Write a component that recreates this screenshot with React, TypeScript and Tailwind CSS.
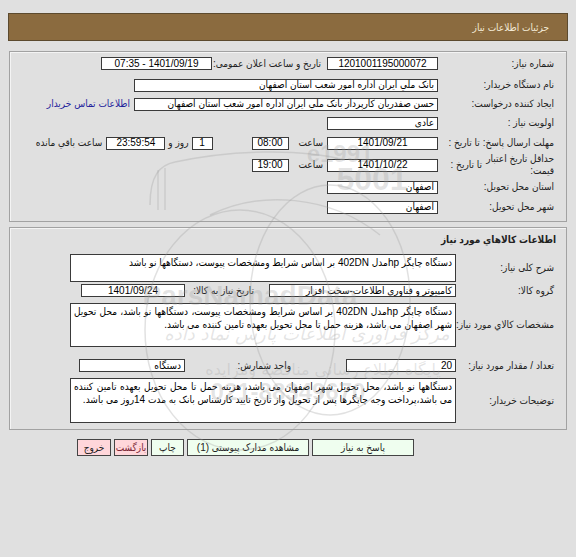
import React from "react";

type Kids = { className?: string; children?: React.ReactNode };

function Box({ className = "", children }: Kids) {
  return (
    <div
      className={`flex h-[13px] shrink-0 items-center overflow-hidden whitespace-nowrap border border-[#3a3a3a] bg-white px-[3px] text-[10px] leading-none text-black ${className}`}>
      {children}
    </div>
  );
}

function Area({ className = "", children }: Kids) {
  return (
    <div
      className={`shrink-0 overflow-hidden border border-[#3a3a3a] bg-white px-[3px] pt-[1px] text-justify text-[10px] leading-[13px] text-black ${className}`}>
      {children}
    </div>
  );
}

function Label({ className = "", children }: Kids) {
  return (
    <div className={`shrink-0 whitespace-nowrap text-[10px] leading-[12px] text-[#222] ${className}`}>
      {children}
    </div>
  );
}

function Btn({ className = "", children }: Kids) {
  return (
    <div
      className={`flex h-[17px] shrink-0 items-center justify-center whitespace-nowrap border border-[#444] text-[10px] leading-none ${className}`}>
      {children}
    </div>
  );
}

// faint site watermark drawn over the form
function Watermark() {
  return (
    <svg
      className="pointer-events-none absolute left-0 top-0"
      style={{ direction: "ltr" }}
      width="576"
      height="557"
      viewBox="0 0 576 557">
      <g fill="none" stroke="#9a9a9a" strokeOpacity="0.3" strokeWidth="1.5">
        <path d="M150 205 C150 175 160 165 175 162 C230 150 300 148 345 160" />
        <path d="M158 210 L158 170" />
        <path d="M165 210 L165 168" />
        <ellipse cx="240" cy="330" rx="95" ry="120" />
        <ellipse cx="330" cy="300" rx="80" ry="115" />
        <path d="M210 215 C260 190 330 195 380 235" />
      </g>
      <g fill="#a0a0a0" fillOpacity="0.28" fontFamily="Liberation Sans, DejaVu Sans, sans-serif" textAnchor="middle">
        <text x="340" y="162" fontSize="24" fontWeight="bold">e1991</text>
        <text x="372" y="190" fontSize="32" fontWeight="bold">5001</text>
        <text x="250" y="305" fontSize="28" fontWeight="bold">ParsNamadData</text>
        <text x="288" y="400" fontSize="24" fontWeight="bold">021-88349670</text>
      </g>
      <g fill="#a0a0a0" fillOpacity="0.28" fontFamily="DejaVu Sans, sans-serif" textAnchor="middle" style={{ direction: "rtl" }}>
        <text x="307" y="340" fontSize="18" fontStyle="italic">مرکز فراوری اطلاعات پارس نماد داده</text>
        <text x="323" y="375" fontSize="16">پایگاه اطلاع رسانی مناقصه ومزایده</text>
      </g>
    </svg>
  );
}

const panel = "mx-[9px] border border-[#a2a2a2] shadow-[inset_1px_1px_0_#f4f4f4]";

export default function App() {
  return (
    <div
      dir="rtl"
      className="relative min-h-[557px] w-[576px] bg-[#e0e0e0] pt-[13px] font-['Liberation_Sans','DejaVu_Sans_Condensed','DejaVu_Sans',sans-serif]">
      {/* header bar */}
      <div className="mx-[8px] flex h-[28px] items-center border border-[#5c4a2e] bg-[#8b6b3f] pr-[18px] text-[10px] text-[#f3ead6]">
        جزئیات اطلاعات نیاز
      </div>

      {/* panel 1 */}
      <div className={`${panel} mt-[10px] pb-[4px]`}>
        <div className="flex h-[23px] items-center">
          <Label className="w-[128px] pr-[12px]">شماره نیاز:</Label>
          <Box className="w-[111px] justify-center">1201001195000072</Box>
          <Label className="w-[115px] pr-[6px]">تاریخ و ساعت اعلان عمومی:</Label>
          <Box className="w-[111px] justify-center">1401/09/19 - 07:35</Box>
        </div>
        <div className="flex h-[20px] items-center">
          <Label className="w-[128px] pr-[12px]">نام دستگاه خریدار:</Label>
          <Box className="w-[304px]">بانک ملي ایران اداره امور شعب استان اصفهان</Box>
        </div>
        <div className="flex h-[18px] items-center">
          <Label className="w-[128px] pr-[12px]">ایجاد کننده درخواست:</Label>
          <Box className="w-[304px]">حسن صفدریان کارپرداز بانک ملي ایران اداره امور شعب استان اصفهان</Box>
          <Label className="pr-[4px] text-[#24249c]">اطلاعات تماس خریدار</Label>
        </div>
        <div className="flex h-[20px] items-center">
          <Label className="w-[128px] pr-[12px]">اولویت نیاز :</Label>
          <Box className="w-[111px]">عادی</Box>
        </div>
        <div className="flex h-[20px] items-center">
          <Label className="w-[128px] pr-[12px]">مهلت ارسال پاسخ: تا تاریخ :</Label>
          <Box className="w-[111px] justify-center">1401/09/21</Box>
          <Label className="pr-[4px]">ساعت</Label>
          <Box className="mr-[10px] w-[37px] justify-center">08:00</Box>
          <Box className="mr-[39px] w-[21px] justify-center">1</Box>
          <Label className="pr-[3px]">روز و</Label>
          <Box className="mr-[3px] w-[59px] justify-center bg-[#efefcb] text-[#6d6d45]">23:59:54</Box>
          <Label className="pr-[4px]">ساعت باقي مانده</Label>
        </div>
        <div className="flex h-[24px] items-center">
          <div className="flex w-[128px] shrink-0 items-center pr-[12px]">
            <Label className="w-[70px] whitespace-normal">
              حداقل تاریخ اعتبار
              <br />
              قیمت:
            </Label>
            <Label className="pr-[2px]">تا تاریخ :</Label>
          </div>
          <Box className="w-[111px] justify-center">1401/10/22</Box>
          <Label className="pr-[4px]">ساعت</Label>
          <Box className="mr-[10px] w-[37px] justify-center">19:00</Box>
        </div>
        <div className="flex h-[20px] items-center">
          <Label className="w-[128px] pr-[12px]">استان محل تحویل:</Label>
          <Box className="w-[111px]">اصفهان</Box>
        </div>
        <div className="flex h-[20px] items-center">
          <Label className="w-[128px] pr-[12px]">شهر محل تحویل:</Label>
          <Box className="w-[111px]">اصفهان</Box>
        </div>
      </div>

      {/* panel 2 */}
      <div className={`${panel} mt-[5px] pb-[6px]`}>
        <div className="flex h-[22px] items-center pr-[10px] text-[10px] font-bold text-[#222]">
          اطلاعات کالاهاي مورد نياز
        </div>
        <div className="mt-[4px] flex items-center">
          <Label className="w-[110px] pr-[12px]">شرح کلی نیاز:</Label>
          <Area className="h-[28px] w-[386px]">
            دستگاه چاپگر hpمدل 402DN بر اساس شرایط ومشخصات پیوست، دستگاهها نو باشد
          </Area>
        </div>
        <div className="mt-[2px] flex items-center">
          <Label className="w-[110px] pr-[12px]">گروه کالا:</Label>
          <Box className="w-[187px]">کامپیوتر و فناوری اطلاعات-سخت افزار</Box>
          <Label className="w-[84px] pr-[15px]">تاریخ نیاز به کالا:</Label>
          <Box className="w-[104px] justify-center">1401/09/24</Box>
        </div>
        <div className="mt-[6px] flex items-center">
          <Label className="w-[110px] pr-[12px]">مشخصات کالاي مورد نیاز:</Label>
          <Area className="h-[44px] w-[386px]">
            دستگاه چاپگر hpمدل 402DN بر اساس شرایط ومشخصات پیوست، دستگاهها نو باشد، محل تحویل
            شهر اصفهان می باشد، هزینه حمل تا محل تحویل بعهده تامین کننده می باشد.
          </Area>
        </div>
        <div className="mt-[12px] flex items-center">
          <Label className="w-[110px] pr-[12px]">تعداد / مقدار مورد نیاز:</Label>
          <Box className="w-[110px]">20</Box>
          <Label className="w-[161px] pr-[55px]">واحد شمارش:</Label>
          <Box className="w-[106px]">دستگاه</Box>
        </div>
        <div className="mt-[6px] flex items-center">
          <Label className="w-[110px] pr-[12px]">توضیحات خریدار:</Label>
          <Area className="h-[45px] w-[386px]">
            دستگاهها نو باشد، محل تحویل شهر اصفهان می باشد، هزینه حمل تا محل تحویل بعهده تامین کننده
            می باشد،پرداخت وجه چاپگرها پس از تحویل واز تاریخ تایید کارشناس بانک به مدت 14روز می باشد.
          </Area>
        </div>
      </div>

      {/* buttons */}
      <div className="mt-[9px] flex gap-[3px] pr-[162px]">
        <Btn className="w-[102px] bg-[#effeef] text-[#222]">پاسخ به نیاز</Btn>
        <Btn className="w-[122px] bg-[#effeef] text-[#222]">مشاهده مدارک پیوستی (1)</Btn>
        <Btn className="w-[33px] bg-[#effeef] text-[#222]">چاپ</Btn>
        <Btn className="w-[34px] bg-[#ffd6da] text-[#7a2636]">بازگشت</Btn>
        <Btn className="w-[34px] bg-[#ffd6da] text-[#222]">خروج</Btn>
      </div>

      <Watermark />
    </div>
  );
}
